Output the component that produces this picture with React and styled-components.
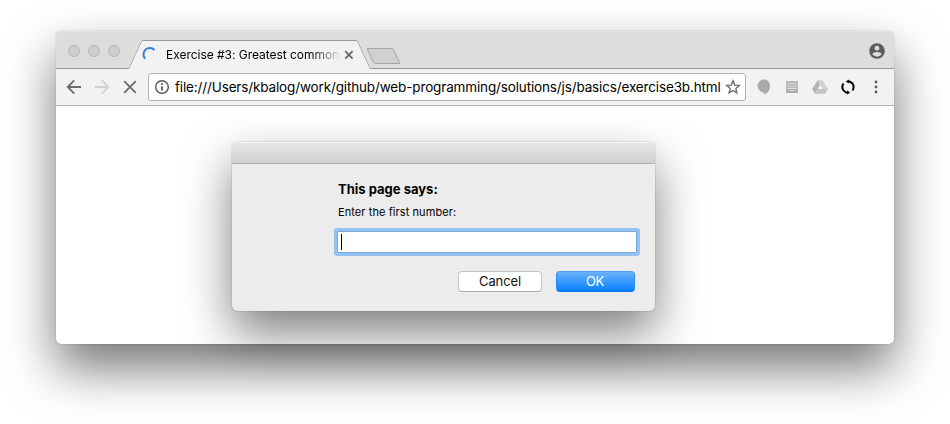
import React from "react";
import styled, { createGlobalStyle, css } from "styled-components";

const GlobalStyle = createGlobalStyle`
  * { box-sizing: border-box; }
  body {
    margin: 0;
    background: #fff;
    overflow: hidden;
    font-family: Inter, "Liberation Sans", sans-serif;
    color: #000;
  }
`;

const Desktop = styled.main`
  height: 424px;
  padding: 31px 56px 0;
`;

const BrowserWindow = styled.section`
  display: flex;
  flex-direction: column;
  width: 838px;
  height: 313px;
  border-radius: 5px;
  background: #fff;
  box-shadow: 0 0 1px rgba(0, 0, 0, 0.5), 0 24px 50px rgba(0, 0, 0, 0.54);
`;

const TabStrip = styled.header`
  display: flex;
  height: 38px;
  padding-left: 12px;
  background: #dddddd;
  border-bottom: 1px solid #999;
  border-radius: 5px 5px 0 0;
  box-shadow: inset 0 1px #e6e6e6;
`;

const WindowControls = styled.div`
  display: flex;
  gap: 8px;
  width: 60px;
  padding-top: 14px;
`;

const ControlDot = styled.span`
  width: 12px;
  height: 12px;
  border: 1px solid #b4b4b4;
  border-radius: 50%;
  background: #cdcdcd;
`;

const Tab = styled.div`
  position: relative;
  isolation: isolate;
  display: flex;
  align-items: center;
  flex: none;
  width: 243px;
  height: 29px;
  margin-top: 9px;
  padding: 0 14px 0 15px;

  &::before,
  &::after {
    content: "";
    position: absolute;
    z-index: -1;
    top: 0;
    bottom: 0;
    width: 60%;
    background: #f2f2f2;
    border-top: 1px solid #999;
  }
  &::before {
    left: 0;
    border-left: 1px solid #999;
    border-top-left-radius: 2px;
    transform: skewX(-25deg);
    transform-origin: bottom left;
  }
  &::after {
    right: 0;
    border-right: 1px solid #999;
    border-top-right-radius: 2px;
    transform: skewX(25deg);
    transform-origin: bottom right;
  }
`;

const TabTitle = styled.span`
  flex: 1;
  margin-left: 7px;
  white-space: nowrap;
  font-size: 12px;
  line-height: 16px;
  letter-spacing: -0.03px;
  mask-image: linear-gradient(to right, #000 144px, transparent 176px);
`;

const NewTab = styled.div`
  width: 27px;
  height: 16px;
  margin: 17px 0 0 -1px;
  border: 1px solid #a5a5a5;
  border-radius: 2px;
  background: #d0d0d0;
  transform: skewX(25deg);
`;

const Profile = styled.div`
  margin: 12px 9px 0 auto;
  height: 16px;
`;

const Toolbar = styled.nav`
  display: flex;
  align-items: center;
  height: 37px;
  flex: none;
  padding: 0 10px;
  background: #f2f2f2;
  border-bottom: 1px solid #b2b2b2;
`;

const Navigation = styled.div`
  display: flex;
  gap: 12px;
  width: 82px;
  height: 16px;
`;

const AddressBar = styled.div`
  display: flex;
  align-items: center;
  width: 598px;
  height: 28px;
  padding: 0 4px 0 6px;
  border: 1px solid #b3b3b3;
  border-radius: 3px;
  background: #fff;
`;

const Url = styled.span`
  flex: 1;
  min-width: 0;
  margin-left: 4px;
  white-space: nowrap;
  font-size: 13.5px;
  line-height: 20px;
  letter-spacing: -0.143px;
`;

const Extensions = styled.div`
  display: flex;
  gap: 12px;
  height: 16px;
  margin-left: 10px;
`;

const Icon = styled.svg`
  display: block;
  flex: none;
  width: 16px;
  height: 16px;
  overflow: visible;
`;

const LineIcon = styled(Icon)`
  fill: none;
  stroke: ${(p) => p.$color || "#6b6b6b"};
  stroke-width: ${(p) => p.$weight || 1.8};
`;

const Page = styled.div`
  flex: 1;
  padding: 36px 0 0 176px;
`;

const Dialog = styled.section`
  width: 423px;
  height: 169px;
  border-radius: 5px;
  background: #ececec;
  box-shadow: 0 0 1px rgba(0, 0, 0, 0.65), 0 22px 48px rgba(0, 0, 0, 0.5);
`;

const DialogBar = styled.div`
  height: 22px;
  border-bottom: 1px solid #b0b0b0;
  border-radius: 5px 5px 0 0;
  background: linear-gradient(#e8e6e8, #d1cfd1);
  box-shadow: inset 0 1px #f3f3f3;
`;

const DialogContent = styled.div`
  padding: 16px 20px 0 106px;
`;

const Heading = styled.h1`
  margin: 0;
  font-size: 13px;
  line-height: 18px;
  font-weight: 700;
  letter-spacing: 0.01px;
`;

const Message = styled.p`
  margin: 7px 0 0;
  font-size: 11px;
  line-height: 14px;
  letter-spacing: 0.08px;
`;

const Field = styled.div`
  width: 300px;
  height: 22px;
  margin: 12px 0 0 -1px;
  padding: 3px 4px;
  border: 1px solid #76a9dc;
  background: #fff;
  box-shadow: 0 0 0 3px #94c2f3;
  border-radius: 1px;
`;

const Caret = styled.span`
  display: block;
  width: 1px;
  height: 16px;
  margin-top: -1px;
  margin-left: -1px;
  background: #000;
`;

const Actions = styled.div`
  display: flex;
  justify-content: flex-end;
  gap: 14px;
  margin-top: 18px;
`;

const Button = styled.button`
  height: 21px;
  padding: 0;
  border: 1px solid #c3c3c3;
  border-bottom-color: #aaa;
  border-radius: 4px;
  background: #fff;
  color: #111;
  font: 13px/19px Inter, "Liberation Sans", sans-serif;
  letter-spacing: -0.1px;
  width: 84px;

  ${(p) =>
    p.$primary &&
    css`
      width: 79px;
      padding-right: 1px;
      color: #fff;
      border-color: #479cf1 #278bf5 #0873ee;
      background: linear-gradient(#6bb3fa, #0780ff);
      letter-spacing: -0.4px;
    `}
`;

export default function App() {
  return (
    <>
      <GlobalStyle />
      <Desktop>
        <BrowserWindow>
          <TabStrip>
            <WindowControls>
              <ControlDot />
              <ControlDot />
              <ControlDot />
            </WindowControls>
            <Tab>
              <LineIcon $color="#3f7fc9" $weight={2} viewBox="0 0 16 16">
                <path d="M2.2 11.8A6.2 6.2 0 0 1 11.5 3" />
              </LineIcon>
              <TabTitle>Exercise #3: Greatest common</TabTitle>
              <LineIcon $color="#666" viewBox="0 0 16 16">
                <path d="M4.2 4.2l7.4 7.4M11.6 4.2l-7.4 7.4" />
              </LineIcon>
            </Tab>
            <NewTab />
            <Profile>
              <Icon viewBox="0 0 16 16">
                <circle cx="8" cy="8" r="7.8" fill="#5c5c5c" />
                <circle cx="8" cy="5.2" r="2.4" fill="#ddd" />
                <path d="M3.3 11.2C3.5 9.6 6.6 8.9 8 8.9s4.5.7 4.7 2.3a5.7 5.7 0 0 1-9.4 0z" fill="#ddd" />
              </Icon>
            </Profile>
          </TabStrip>
          <Toolbar>
            <Navigation>
              <LineIcon viewBox="0 0 16 16">
                <path d="M15 8H2M8.2 1.4L1.7 8l6.5 6.6" />
              </LineIcon>
              <LineIcon $color="#d1d1d1" viewBox="0 0 16 16">
                <path d="M1 8h13M7.8 1.4L14.3 8l-6.5 6.6" />
              </LineIcon>
              <LineIcon viewBox="0 0 16 16">
                <path d="M2.2 2.2l11.6 11.6M13.8 2.2L2.2 13.8" />
              </LineIcon>
            </Navigation>
            <AddressBar>
              <LineIcon $color="#555" $weight={1.4} viewBox="0 0 16 16">
                <circle cx="7" cy="8" r="6.3" />
                <path d="M7 7.2v4.3M7 4.2v1.7" strokeWidth="1.7" />
              </LineIcon>
              <Url>file:///Users/kbalog/work/github/web-programming/solutions/js/basics/exercise3b.html</Url>
              <LineIcon $color="#666" $weight={1.3} viewBox="0 0 16 16">
                <path d="M8 1.8l1.7 4.3 4.7.3-3.6 3 1.1 4.5L8 11.4l-3.9 2.5 1.1-4.5-3.6-3 4.7-.3z" />
              </LineIcon>
            </AddressBar>
            <Extensions>
              <Icon viewBox="0 0 16 16">
                <path d="M7.5.3a6.6 6.6 0 0 0-.2 13.1h1v2.3c3.4-1.7 5.8-4.8 5.8-8.8A6.6 6.6 0 0 0 7.5.3z" fill="#aaa" />
              </Icon>
              <Icon viewBox="0 0 16 16">
                <path d="M2 2h12v9H2z" fill="#bdbdbd" />
                <path d="M2 10h12v4H2z" fill="#adadad" />
                <path d="M4 4.5h8M4 7h8M4.5 11.5h7" stroke="#cfcfcf" fill="none" />
                <path d="M3.5 9.5h9" stroke="#dedede" />
              </Icon>
              <Icon viewBox="0 0 16 16">
                <path d="M5.4 1.2h5.2L15.9 10h-5.3z" fill="#d1d1d1" />
                <path d="M5.4 1.2L8 5.7l-5.1 9L.2 10z" fill="#b5b5b5" />
                <path d="M5.6 10h10.3l-2.6 4.7H2.9z" fill="#c4c4c4" />
              </Icon>
              <LineIcon $color="#000" $weight={2} viewBox="0 0 16 16">
                <path d="M5.9 13.3A5.7 5.7 0 0 1 3.5 4.5M10.1 2.7A5.7 5.7 0 0 1 12.5 11.5M7.8 2.3q1.6 0 2.8.7M8.2 13.7q-1.6 0-2.8-.7" />
                <path d="M8.9.5L5.8 2.4l3.1 2.1zM7.1 15.5l3.1-1.9-3.1-2.1z" fill="#000" stroke="none" />
              </LineIcon>
              <Icon viewBox="0 0 16 16" fill="#5c5c5c">
                <circle cx="8" cy="3" r="1.4" />
                <circle cx="8" cy="8" r="1.4" />
                <circle cx="8" cy="13" r="1.4" />
              </Icon>
            </Extensions>
          </Toolbar>
          <Page>
            <Dialog>
              <DialogBar />
              <DialogContent>
                <Heading>This page says:</Heading>
                <Message>Enter the first number:</Message>
                <Field>
                  <Caret />
                </Field>
                <Actions>
                  <Button>Cancel</Button>
                  <Button $primary>OK</Button>
                </Actions>
              </DialogContent>
            </Dialog>
          </Page>
        </BrowserWindow>
      </Desktop>
    </>
  );
}
